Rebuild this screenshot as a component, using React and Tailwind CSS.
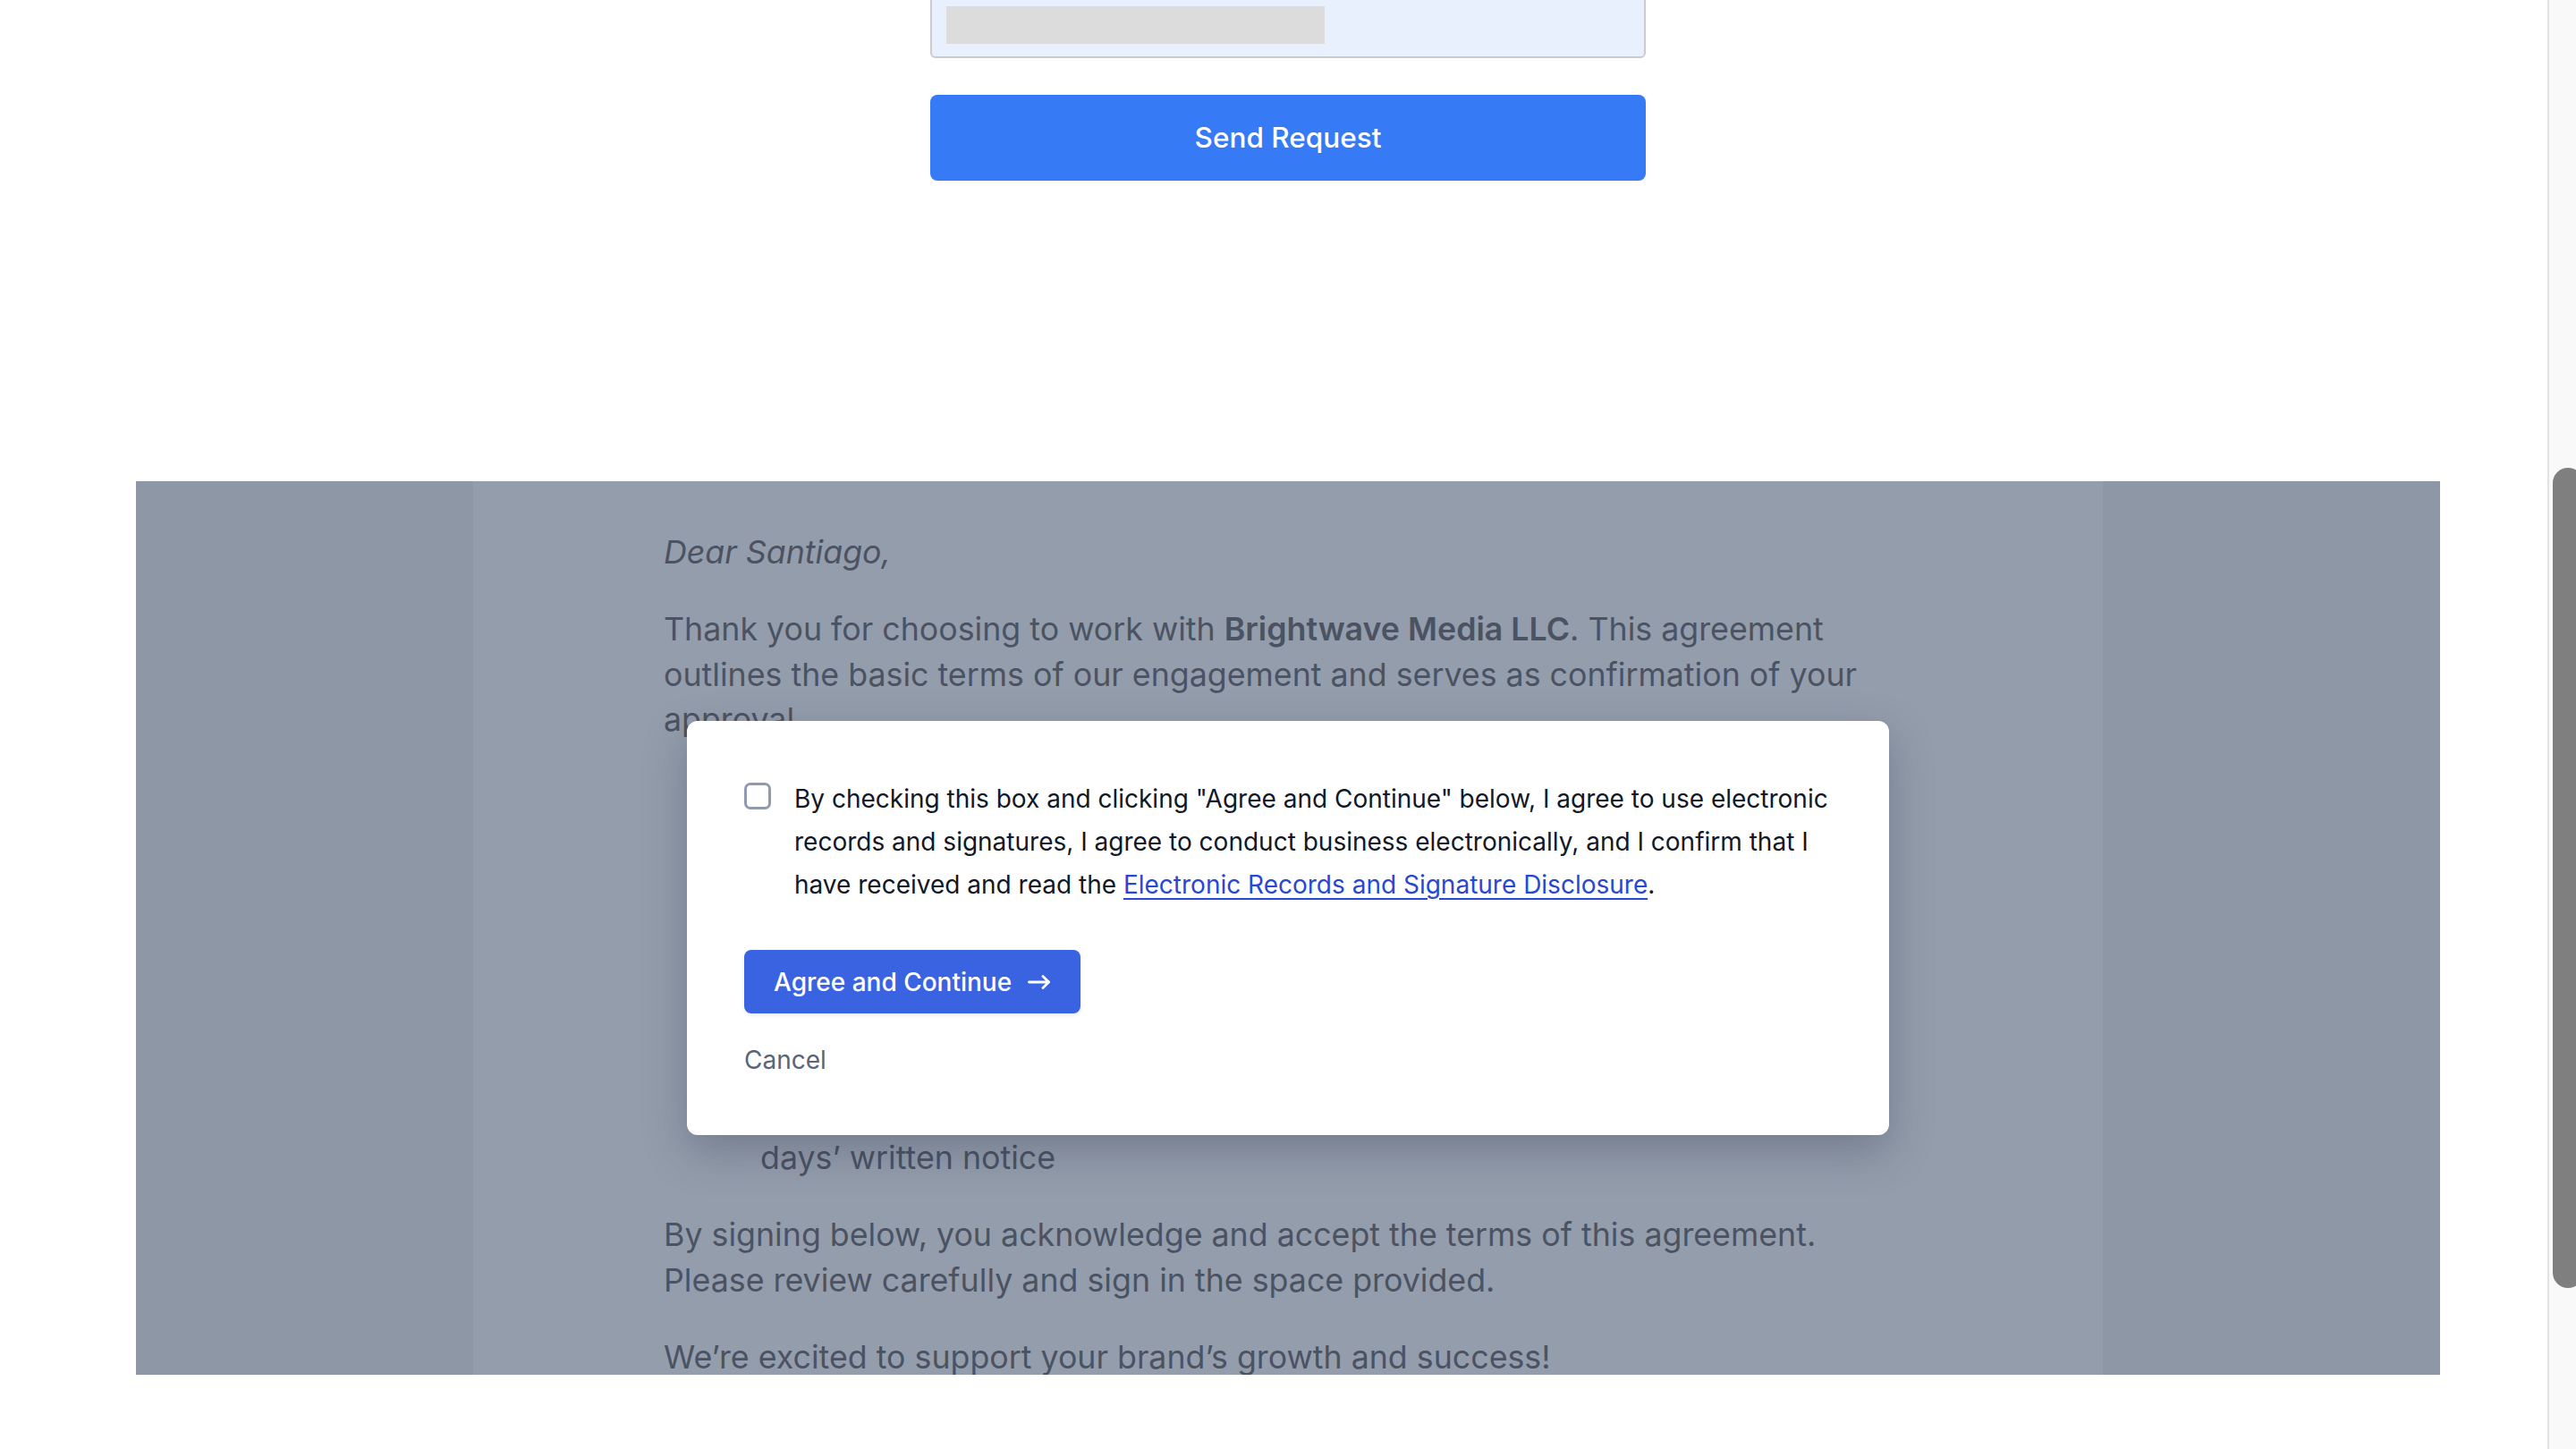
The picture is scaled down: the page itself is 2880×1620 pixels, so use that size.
import React from 'react';

const fontStack = { fontFamily: 'Inter, "Noto Sans", sans-serif' };

function ArrowIcon() {
  return (
    <svg width="26" height="16" viewBox="0 0 26 16" fill="none" stroke="currentColor" strokeWidth="2.8" strokeLinecap="round" strokeLinejoin="round">
      <path d="M1.5 8h22" />
      <path d="M17 1.5 23.5 8 17 14.5" />
    </svg>
  );
}

function RequestForm() {
  return (
    <div className="-mt-[40px] flex w-[800px] flex-col">
      <div className="h-[105px] rounded-[6px] border-2 border-[#cbcbcb] bg-[#e8effd] px-[16px] pt-[45px]">
        <div className="h-[42px] w-[423px] bg-[#dcdcdc]" />
      </div>
      <button className="mt-[41px] h-[96px] w-full rounded-[8px] bg-[#367af6] text-[31.5px] font-medium text-white">
        Send Request
      </button>
    </div>
  );
}

function ConsentModal() {
  return (
    <div className="w-[1344px] rounded-[12px] bg-white px-[64px] pb-[60px] pt-[63px] shadow-[0_18px_50px_rgba(30,40,60,0.28)]">
      <label className="flex items-start gap-[26px]">
        <span className="mt-[6px] h-[30px] w-[30px] shrink-0 rounded-[7px] border-[3px] border-[#8f9ab0] bg-white" />
        <span className="text-[28px] leading-[48px] text-[#111827]">
          By checking this box and clicking "Agree and Continue" below, I agree to use electronic records and signatures, I agree to conduct business electronically, and I confirm that I have received and read the{' '}
          <a href="#" className="text-[#2748d3] underline underline-offset-[5px]">
            Electronic Records and Signature Disclosure
          </a>
          .
        </span>
      </label>
      <button className="mt-[49px] flex h-[71px] items-center gap-[18px] rounded-[8px] bg-[#3a63e2] px-[33px] text-[28px] font-medium text-white shadow-[0_2px_4px_rgba(0,0,0,0.08)]">
        Agree and Continue
        <ArrowIcon />
      </button>
      <button className="mt-[28px] block text-[28px] leading-[48px] text-[#5b6475]">Cancel</button>
    </div>
  );
}

function AgreementPreview() {
  return (
    <section className="relative mt-[336px] flex h-[999px] w-[2576px] justify-center overflow-hidden bg-[#8e97a6]">
      <div className="w-[1822px] bg-[#949dac] px-[213px] pt-[54px] text-[35.75px] leading-[50.4px] text-[#4b5363]">
        <p className="italic">Dear Santiago,</p>
        <p className="mt-[36px]">
          Thank you for choosing to work with <strong className="font-semibold">Brightwave Media LLC</strong>. This agreement outlines the basic terms of our engagement and serves as confirmation of your approval.
        </p>
        <ul className="mt-[36px] list-disc pl-[108px]">
          <li>Scope: social media management and content creation,<br />including monthly performance reports</li>
          <li>Term: six months from the effective date, renewable<br />upon mutual written agreement</li>
          <li>Fees: $2,500 per month, invoiced on the first<br />business day of each month</li>
          <li>Payment: due within 15 days of the invoice date</li>
          <li>Termination: either party may end this agreement with 30<br />days’ written notice</li>
        </ul>
        <p className="mt-[36px]">
          By signing below, you acknowledge and accept the terms of this agreement. Please review carefully and sign in the space provided.
        </p>
        <p className="mt-[36px]">We’re excited to support your brand’s growth and success!</p>
      </div>

      <div className="absolute inset-0 flex items-center justify-center">
        <ConsentModal />
      </div>
    </section>
  );
}

export default function App() {
  return (
    <div className="relative h-[1620px] w-full overflow-hidden bg-white" style={fontStack}>
      <main className="flex flex-col items-center">
        <RequestForm />
        <AgreementPreview />
      </main>

      {/* page scrollbar sits over the content */}
      <div className="absolute inset-y-0 right-0 w-[32px] overflow-hidden border-l-2 border-[#e2e2e2] bg-[#f9f9f9] pl-[4px] pt-[523px]">
        <div className="h-[917px] w-[34px] rounded-full bg-[#7f7f7f]" />
      </div>
    </div>
  );
}
